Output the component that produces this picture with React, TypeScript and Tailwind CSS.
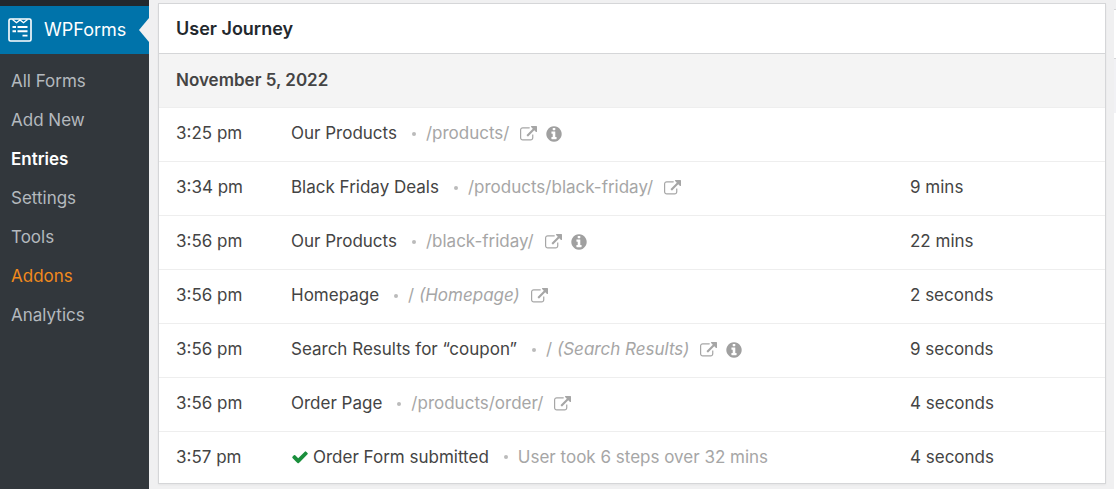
type Step = {
  time: string;
  title: string;
  path: string;
  note?: string;
  info?: boolean;
  submitted?: boolean;
  duration?: string;
};

const menu = [
  { label: 'All Forms', style: 'text-[#b4b9be]' },
  { label: 'Add New', style: 'text-[#b4b9be]' },
  { label: 'Entries', style: 'font-semibold text-white' },
  { label: 'Settings', style: 'text-[#b4b9be]' },
  { label: 'Tools', style: 'text-[#b4b9be]' },
  { label: 'Addons', style: 'text-[#f18a1c]' },
  { label: 'Analytics', style: 'text-[#b4b9be]' },
];

const steps: Step[] = [
  { time: '3:25 pm', title: 'Our Products', path: '/products/', info: true },
  { time: '3:34 pm', title: 'Black Friday Deals', path: '/products/black-friday/', duration: '9 mins' },
  { time: '3:56 pm', title: 'Our Products', path: '/black-friday/', info: true, duration: '22 mins' },
  { time: '3:56 pm', title: 'Homepage', path: '/', note: '(Homepage)', duration: '2 seconds' },
  { time: '3:56 pm', title: 'Search Results for “coupon”', path: '/', note: '(Search Results)', info: true, duration: '9 seconds' },
  { time: '3:56 pm', title: 'Order Page', path: '/products/order/', duration: '4 seconds' },
  { time: '3:57 pm', title: 'Order Form submitted', path: 'User took 6 steps over 32 mins', submitted: true, duration: '4 seconds' },
];

function FormsIcon() {
  return (
    <svg className="size-6 shrink-0" viewBox="0 0 24 24" fill="none" stroke="currentColor" strokeWidth="1.6" aria-hidden="true">
      <rect x="1" y="1" width="22" height="22" rx="1.5" />
      <path d="M4.500 1.500l4 3.200 3.500-2.700 3.500 2.700 4-3.200" strokeWidth="1.400" />
      <path d="M4.500 9h3.500M9.500 9h10M4.500 13.300h3.500M9.500 13.300h10M14.500 17.600h5" strokeWidth="1.900" />
    </svg>
  );
}

function ExternalLinkIcon() {
  return (
    <svg className="size-[17px]" viewBox="0 0 1792 1792" fill="currentColor" aria-hidden="true">
      <path d="M1408 928v320q0 119-84.5 203.5t-203.5 84.5h-832q-119 0-203.5-84.5t-84.5-203.5v-832q0-119 84.5-203.5t203.5-84.5h704q14 0 23 9t9 23v64q0 14-9 23t-23 9h-704q-66 0-113 47t-47 113v832q0 66 47 113t113 47h832q66 0 113-47t47-113v-320q0-14 9-23t23-9h64q14 0 23 9t9 23zm384-864v512q0 26-19 45t-45 19-45-19l-176-176-652 652q-10 10-23 10t-23-10l-114-114q-10-10-10-23t10-23l652-652-176-176q-19-19-19-45t19-45 45-19h512q26 0 45 19t19 45z" />
    </svg>
  );
}

function InfoIcon() {
  return (
    <svg className="size-[18px]" viewBox="0 0 1792 1792" fill="currentColor" aria-hidden="true">
      <path d="M1152 1376v-160q0-14-9-23t-23-9h-96v-512q0-14-9-23t-23-9h-320q-14 0-23 9t-9 23v160q0 14 9 23t23 9h96v320h-96q-14 0-23 9t-9 23v160q0 14 9 23t23 9h448q14 0 23-9t9-23zm-128-896v-160q0-14-9-23t-23-9h-192q-14 0-23 9t-9 23v160q0 14 9 23t23 9h192q14 0 23-9t9-23zm640 416q0 209-103 385.5t-279.5 279.5-385.5 103-385.5-103-279.5-279.5-103-385.5 103-385.5 279.5-279.5 385.5-103 385.5 103 279.5 279.5 103 385.5z" />
    </svg>
  );
}

function CheckIcon() {
  return (
    <svg className="mr-1 size-[18px] text-[#1a8f3c]" viewBox="0 0 1792 1792" fill="currentColor" aria-hidden="true">
      <path d="M1671 566q0 40-28 68l-724 724-136 136q-28 28-68 28t-68-28l-136-136-362-362q-28-28-28-68t28-68l136-136q28-28 68-28t68 28l294 295 656-657q28-28 68-28t68 28l136 136q28 28 28 68z" />
    </svg>
  );
}

function Sidebar() {
  return (
    <nav className="w-[149px] shrink-0 bg-[#32373c]">
      <div className="h-[6px] bg-[#23282d]" />
      {/* current top-level item */}
      <a href="#wpforms" className="relative flex h-12 items-center gap-3 bg-[#0073aa] pl-2 text-lg text-white">
        <FormsIcon />
        WPForms
        <span className="absolute top-3 right-0 border-y-[12px] border-r-[10px] border-y-transparent border-r-[#f0f0f1]" />
      </a>
      {/* submenu */}
      <ul className="pt-2">
        {menu.map((item) => (
          <li key={item.label}>
            <a href="#submenu" className={`block px-[11px] text-[17px] leading-[39px] ${item.style}`}>
              {item.label}
            </a>
          </li>
        ))}
      </ul>
    </nav>
  );
}

function StepRow({ step }: { step: Step }) {
  return (
    <tr className="h-[54px] border-t border-[#eeeeee] last:h-[52px]">
      <td className="w-[132px] pl-[17px]">{step.time}</td>
      <td>
        <div className="flex items-center whitespace-nowrap">
          {step.submitted && <CheckIcon />}
          {step.title}
          <span className="mr-[10px] ml-[15px] size-1 rounded-full bg-[#bbbbbb]" />
          <span className="text-[#a6a6a6]">
            {step.path}
            {step.note && <em> {step.note}</em>}
          </span>
          {!step.submitted && (
            <a href="#visit" aria-label="Open page" className="ml-[11px] text-[#a6a6a6]">
              <ExternalLinkIcon />
            </a>
          )}
          {step.info && (
            <button type="button" aria-label="Details" className="ml-2 text-[#a0a0a0]">
              <InfoIcon />
            </button>
          )}
        </div>
      </td>
      <td className="w-[195px]">{step.duration}</td>
    </tr>
  );
}

function App() {
  return (
    <div className="flex min-h-screen bg-[#f0f0f1] font-['Inter',sans-serif] text-[17px] text-[#444444]">
      <Sidebar />
      <main className="min-w-0 flex-1 pt-[3px] pr-2 pl-[9px]">
        <section className="border border-[#d5d6d8] bg-white shadow-xs">
          <h2 className="border-b border-[#d5d6d8] px-[17px] text-lg leading-[49px] font-semibold text-[#23282d]">
            User Journey
          </h2>
          <table className="w-full border-collapse text-left">
            <thead>
              <tr className="h-[53px] bg-[#f4f4f4]">
                <th colSpan={3} className="pl-[17px] font-semibold">
                  November 5, 2022
                </th>
              </tr>
            </thead>
            <tbody>
              {steps.map((step, i) => (
                <StepRow key={i} step={step} />
              ))}
            </tbody>
          </table>
        </section>
      </main>
      {/* edge of the side column */}
      <aside className="flex w-[2px] shrink-0 flex-col pt-[9px]">
        <div className="h-[50px] border-y border-[#d5d6d8] bg-white" />
        <div className="h-[54px] bg-[#f2f2f5]" />
        <div className="flex-1 bg-white" />
      </aside>
    </div>
  );
}

export default App;
